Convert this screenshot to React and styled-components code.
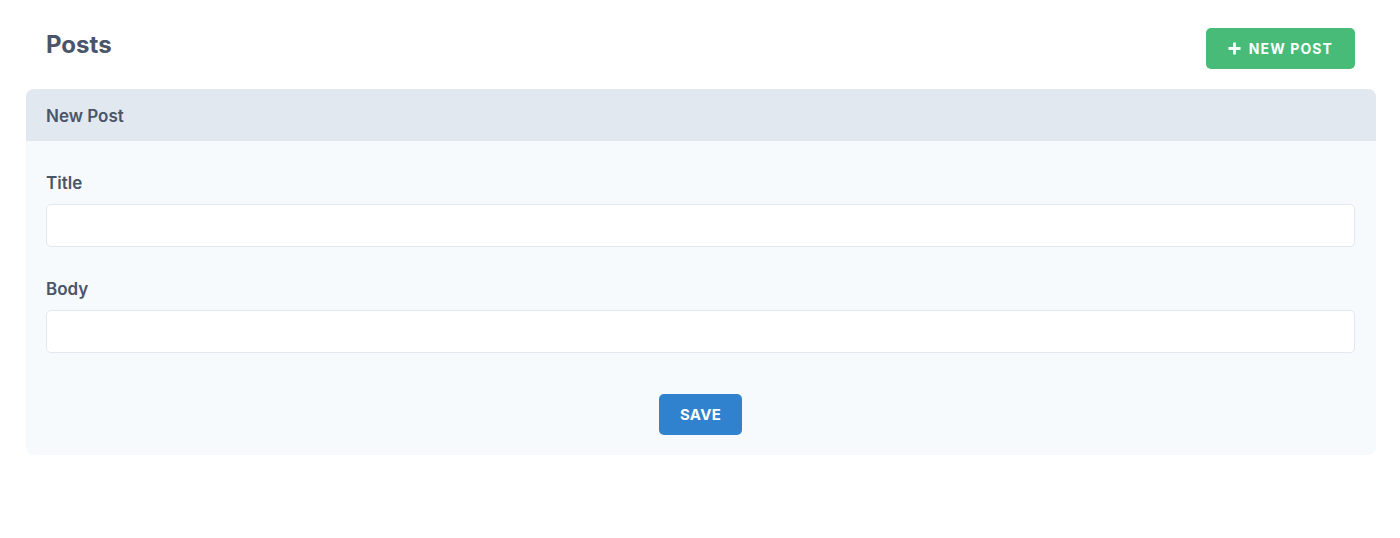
import React from 'react';
import styled, { createGlobalStyle } from 'styled-components';

const Global = createGlobalStyle`
  body {
    margin: 0;
    background: #ffffff;
    font-family: Inter, "Noto Sans", sans-serif;
    color: #4a5568;
  }
`;

const Page = styled.div`
  padding: 28px 24px 0 26px;
`;

const TopBar = styled.div`
  display: flex;
  align-items: center;
  justify-content: space-between;
  padding: 0 21px 0 20px;
  margin-bottom: 20px;
`;

const Heading = styled.h1`
  margin: 0;
  font-size: 24px;
  font-weight: 700;
  color: #4a5568;
  line-height: 32px;
  margin-top: -8px;
`;

const Button = styled.button`
  display: inline-flex;
  align-items: center;
  justify-content: center;
  gap: 8px;
  height: 41px;
  padding: 0 ${({ $px }) => $px || 20}px;
  border: none;
  border-radius: 5px;
  background: ${({ $bg }) => $bg};
  color: #ffffff;
  font-family: Inter, sans-serif;
  font-size: ${({ $fs }) => $fs || 14}px;
  font-weight: 700;
  letter-spacing: ${({ $ls }) => $ls || 0}px;
  text-transform: uppercase;
  cursor: pointer;
`;

const Card = styled.div`
  background: #f7fafc;
  border-radius: 8px;
  overflow: hidden;
`;

const CardHeader = styled.div`
  height: 52px;
  display: flex;
  align-items: center;
  padding: 1px 20px 0;
  box-sizing: border-box;
  background: #e2e8f0;
  font-size: 17px;
  font-weight: 600;
  color: #4a5568;
`;

const CardBody = styled.form`
  display: flex;
  flex-direction: column;
  padding: 30px 21px 20px 20px;
`;

const Field = styled.div`
  display: flex;
  flex-direction: column;
  gap: 9px;
  margin-bottom: 30px;
`;

const Label = styled.label`
  font-size: 17px;
  font-weight: 600;
  line-height: 24px;
  color: #4a5568;
`;

const Input = styled.input`
  height: 43px;
  box-sizing: border-box;
  border: 1px solid #e2e8f0;
  border-radius: 5px;
  background: #ffffff;
  padding: 0 16px;
  font-family: Inter, sans-serif;
  font-size: 16px;
  outline: none;
`;

const Actions = styled.div`
  display: flex;
  justify-content: center;
  margin-top: 11px;
`;

const Plus = () => (
  <svg width="13" height="13" viewBox="0 0 13 13">
    <path d="M6.5 0.5v12M0.5 6.5h12" stroke="#fff" strokeWidth="2.8" strokeLinecap="butt" />
  </svg>
);

export default function App() {
  return (
    <>
      <Global />
      <Page>
        <TopBar>
          <Heading>Posts</Heading>
          <Button $bg="#48bb78" $px={22} $ls={1.1}>
            <Plus />
            New Post
          </Button>
        </TopBar>
        <Card>
          <CardHeader>New Post</CardHeader>
          <CardBody onSubmit={(e) => e.preventDefault()}>
            <Field>
              <Label>Title</Label>
              <Input />
            </Field>
            <Field>
              <Label>Body</Label>
              <Input />
            </Field>
            <Actions>
              <Button $bg="#3182ce" $px={21} $fs={15} $ls={0.3}>Save</Button>
            </Actions>
          </CardBody>
        </Card>
      </Page>
    </>
  );
}
